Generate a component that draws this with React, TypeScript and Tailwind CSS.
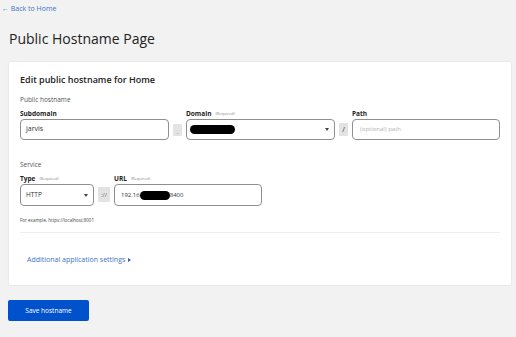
import React from "react";

const Req = () => <span className="ml-[4px] text-[4px] font-normal text-[#8a8a8a]">(Required)</span>;

export default function App() {
  return (
    <div className="w-[516px] h-[337px] bg-[#f2f2f2] overflow-hidden" style={{ fontFamily: '"Open Sans", "Noto Sans", sans-serif' }}>
      <div className="pt-[4px] pl-[2px] text-[7px] text-[#3b73c7] leading-[10px]">← Back to Home</div>
      <div className="pl-[9px] pt-[14px] text-[14px] leading-[22px] text-[#222]">Public Hostname Page</div>
      <div className="mx-[9px] mt-[12px] w-[502px] h-[223px] bg-white rounded-[2px] shadow-[0_0_2px_rgba(0,0,0,0.12)] pt-[11px] px-[11px]">
        <div className="text-[9px] font-semibold text-[#222] leading-[14px]">Edit public hostname for Home</div>
        <div className="mt-[8px] text-[6.5px] text-[#555] leading-[9px]">Public hostname</div>
        <div className="flex items-end mt-[5px]">
          <div className="flex flex-col">
            <div className="text-[6.5px] font-bold text-[#222] leading-[9px] mb-[1px]">Subdomain</div>
            <div className="w-[149px] h-[21px] border border-[#8f8f8f] rounded-[4px] flex items-center pl-[5px] text-[7px] text-[#333]">jarvis</div>
          </div>
          <div className="w-[9px] h-[12px] bg-[#e3e3e3] rounded-[1px] mx-[4px] mb-[4px] flex items-end justify-center text-[6px] text-[#666] leading-[8px]">.</div>
          <div className="flex flex-col">
            <div className="text-[6.5px] font-bold text-[#222] leading-[9px] mb-[1px] flex items-center">Domain<Req /></div>
            <div className="w-[149px] h-[21px] border border-[#8f8f8f] rounded-[4px] flex items-center pl-[3px] pr-[5px]">
              <div className="w-[45px] h-[9px] bg-black rounded-full" />
              <div className="flex-1" />
              <div className="w-0 h-0 border-l-[2.5px] border-r-[2.5px] border-t-[3px] border-l-transparent border-r-transparent border-t-[#444]" />
            </div>
          </div>
          <div className="w-[9px] h-[13px] bg-[#e3e3e3] rounded-[1px] mx-[4px] mb-[4px] flex items-center justify-center text-[7px] font-semibold text-[#666] leading-[8px]">/</div>
          <div className="flex flex-col">
            <div className="text-[6.5px] font-bold text-[#222] leading-[9px] mb-[1px]">Path</div>
            <div className="w-[148px] h-[21px] border border-[#8f8f8f] rounded-[4px] flex items-center pl-[7px] text-[6px] text-[#b3b3b3]">(optional) path</div>
          </div>
        </div>
        <div className="mt-[20px] text-[6.5px] text-[#555] leading-[9px]">Service</div>
        <div className="flex items-end mt-[5px]">
          <div className="flex flex-col">
            <div className="text-[6.5px] font-bold text-[#222] leading-[9px] mb-[1px] flex items-center">Type<Req /></div>
            <div className="w-[74px] h-[22px] border border-[#8f8f8f] rounded-[4px] flex items-center pl-[5px] pr-[5px] text-[6.5px] text-[#333]">
              HTTP
              <div className="flex-1" />
              <div className="w-0 h-0 border-l-[2.5px] border-r-[2.5px] border-t-[3px] border-l-transparent border-r-transparent border-t-[#444]" />
            </div>
          </div>
          <div className="w-[12px] h-[15px] bg-[#e3e3e3] rounded-[1px] mx-[4px] mb-[4px] flex items-center justify-center text-[6px] text-[#666] leading-[8px]">://</div>
          <div className="flex flex-col">
            <div className="text-[6.5px] font-bold text-[#222] leading-[9px] mb-[1px] flex items-center">URL<Req /></div>
            <div className="w-[148px] h-[22px] border border-[#8f8f8f] rounded-[4px] flex items-center pl-[6px] text-[6px] text-[#333]">
              192.16<span className="inline-block w-[30px] h-[9px] bg-black rounded-full" />8400
            </div>
          </div>
        </div>
        <div className="mt-[11px] text-[4.5px] text-[#444] leading-[7px]">For example, https://localhost:8001</div>
        <div className="mt-[8px] h-[1px] bg-[#efefef]" />
        <div className="mt-[22px] pl-[7px] text-[7px] text-[#3b73c7] leading-[10px] flex items-center">
          Additional application settings
          <span className="ml-[3px] w-0 h-0 border-t-[2.5px] border-b-[2.5px] border-l-[3px] border-t-transparent border-b-transparent border-l-[#2a5fb0]" />
        </div>
      </div>
      <div className="ml-[8px] mt-[15px] w-[81px] h-[21px] bg-[#0052cc] rounded-[2px] flex items-center justify-center text-white text-[6.5px]">Save hostname</div>
    </div>
  );
}
